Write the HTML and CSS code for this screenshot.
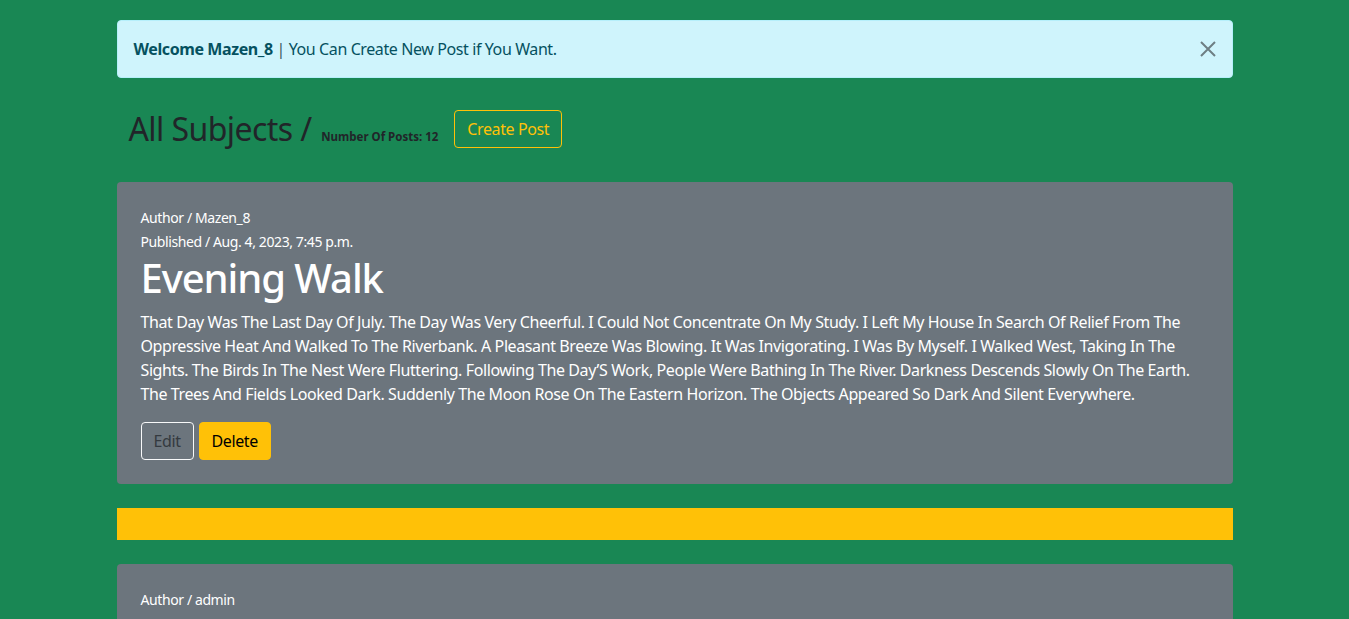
FILE: index.html
```html
<!DOCTYPE html>
<html lang="en">
<head>
<meta charset="utf-8">
<title>All Subjects</title>
<link rel="stylesheet" href="styles.css">
</head>
<body>
<div class="container">
  <div class="alert">
    <div class="alert-text"><strong>Welcome Mazen_8</strong> <span class="sep">|</span> You Can Create New Post if You Want.</div>
    <button class="btn-close" aria-label="Close">
      <svg width="16" height="16" viewBox="0 0 16 16"><path d="M1 1 L15 15 M15 1 L1 15" stroke="#6e7e83" stroke-width="2" fill="none"/></svg>
    </button>
  </div>

  <div class="page-head">
    <h2 class="page-title">All Subjects / <small class="count">Number Of Posts: 12</small></h2>
    <a class="btn btn-outline-warning" href="#">Create Post</a>
  </div>

  <div class="post">
    <p class="meta">Author / Mazen_8</p>
    <p class="meta">Published / Aug. 4, 2023, 7:45 p.m.</p>
    <h1 class="post-title">Evening Walk</h1>
    <p class="post-body"><span class="line">That Day Was The Last Day Of July. The Day Was Very Cheerful. I Could Not Concentrate On My Study. I Left My House In Search Of Relief From The</span> <span class="line">Oppressive Heat And Walked To The Riverbank. A Pleasant Breeze Was Blowing. It Was Invigorating. I Was By Myself. I Walked West, Taking In The</span> <span class="line">Sights. The Birds In The Nest Were Fluttering. Following The Day’S Work, People Were Bathing In The River. Darkness Descends Slowly On The Earth.</span> <span class="line">The Trees And Fields Looked Dark. Suddenly The Moon Rose On The Eastern Horizon. The Objects Appeared So Dark And Silent Everywhere.</span></p>
    <div class="actions">
      <a class="btn btn-edit" href="#">Edit</a>
      <a class="btn btn-delete" href="#">Delete</a>
    </div>
  </div>

  <div class="divider"></div>

  <div class="post post-next">
    <p class="meta">Author / admin</p>
  </div>
</div>
</body>
</html>
```

FILE: styles.css
```css
* { box-sizing: border-box; }
html, body { margin: 0; padding: 0; }
body {
  background: #198754;
  font-family: "Noto Sans", "Open Sans", sans-serif;
  font-size: 16px;
  line-height: 1.5;
  letter-spacing: -0.025em;
  color: #212529;
}
.container {
  width: 1140px;
  margin: 0 auto;
  padding: 20px 12px 0;
}
.alert {
  display: flex;
  align-items: center;
  justify-content: space-between;
  background: #cff4fc;
  border: 1px solid #b6effb;
  border-radius: 4px;
  color: #055160;
  padding: 16px 16px;
  height: 58px;
}
.alert strong { font-weight: 700; color: #055160; }
.alert .sep { color: #3c5a62; }
.btn-close {
  background: none;
  border: 0;
  padding: 0;
  width: 16px;
  height: 16px;
  display: flex;
  cursor: pointer;
}
.page-head {
  display: flex;
  align-items: center;
  gap: 16px;
  margin: 32px 0 34px;
  padding-left: 12px;
  height: 38px;
}
.page-title {
  margin: 0;
  font-size: 32px;
  font-weight: 400;
  line-height: 1.2;
  letter-spacing: -0.018em;
  color: #212529;
}
.count {
  font-size: 11.5px;
  font-weight: 700;
  letter-spacing: 0;
  margin-left: 2px;
}
.btn {
  display: inline-block;
  font-size: 16px;
  line-height: 24px;
  padding: 6px 12px;
  border: 1px solid transparent;
  border-radius: 4px;
  text-decoration: none;
}
.btn-outline-warning {
  color: #ffc107;
  border-color: #ffc107;
}
.post {
  background: #6c757d;
  border-radius: 4px;
  padding: 24px;
  color: #fff;
}
.post-next {
  min-height: 96px;
}
.meta {
  margin: 0;
  font-size: 14px;
  line-height: 24px;
}
.post-title {
  margin: 0 0 8px;
  font-size: 40px;
  font-weight: 500;
  line-height: 48px;
  letter-spacing: -0.027em;
}
.post-body {
  margin: 0 0 16px;
  font-size: 16px;
  line-height: 24px;
}
.post-body .line {
  display: block;
  white-space: nowrap;
}
.actions {
  display: flex;
  gap: 5px;
}
.btn-edit {
  color: #343a40;
  border-color: #f8f9fa;
}
.btn-delete {
  background: #ffc107;
  border-color: #ffc107;
  color: #000;
}
.divider {
  height: 32px;
  background: #ffc107;
  margin: 24px 0;
}
```
